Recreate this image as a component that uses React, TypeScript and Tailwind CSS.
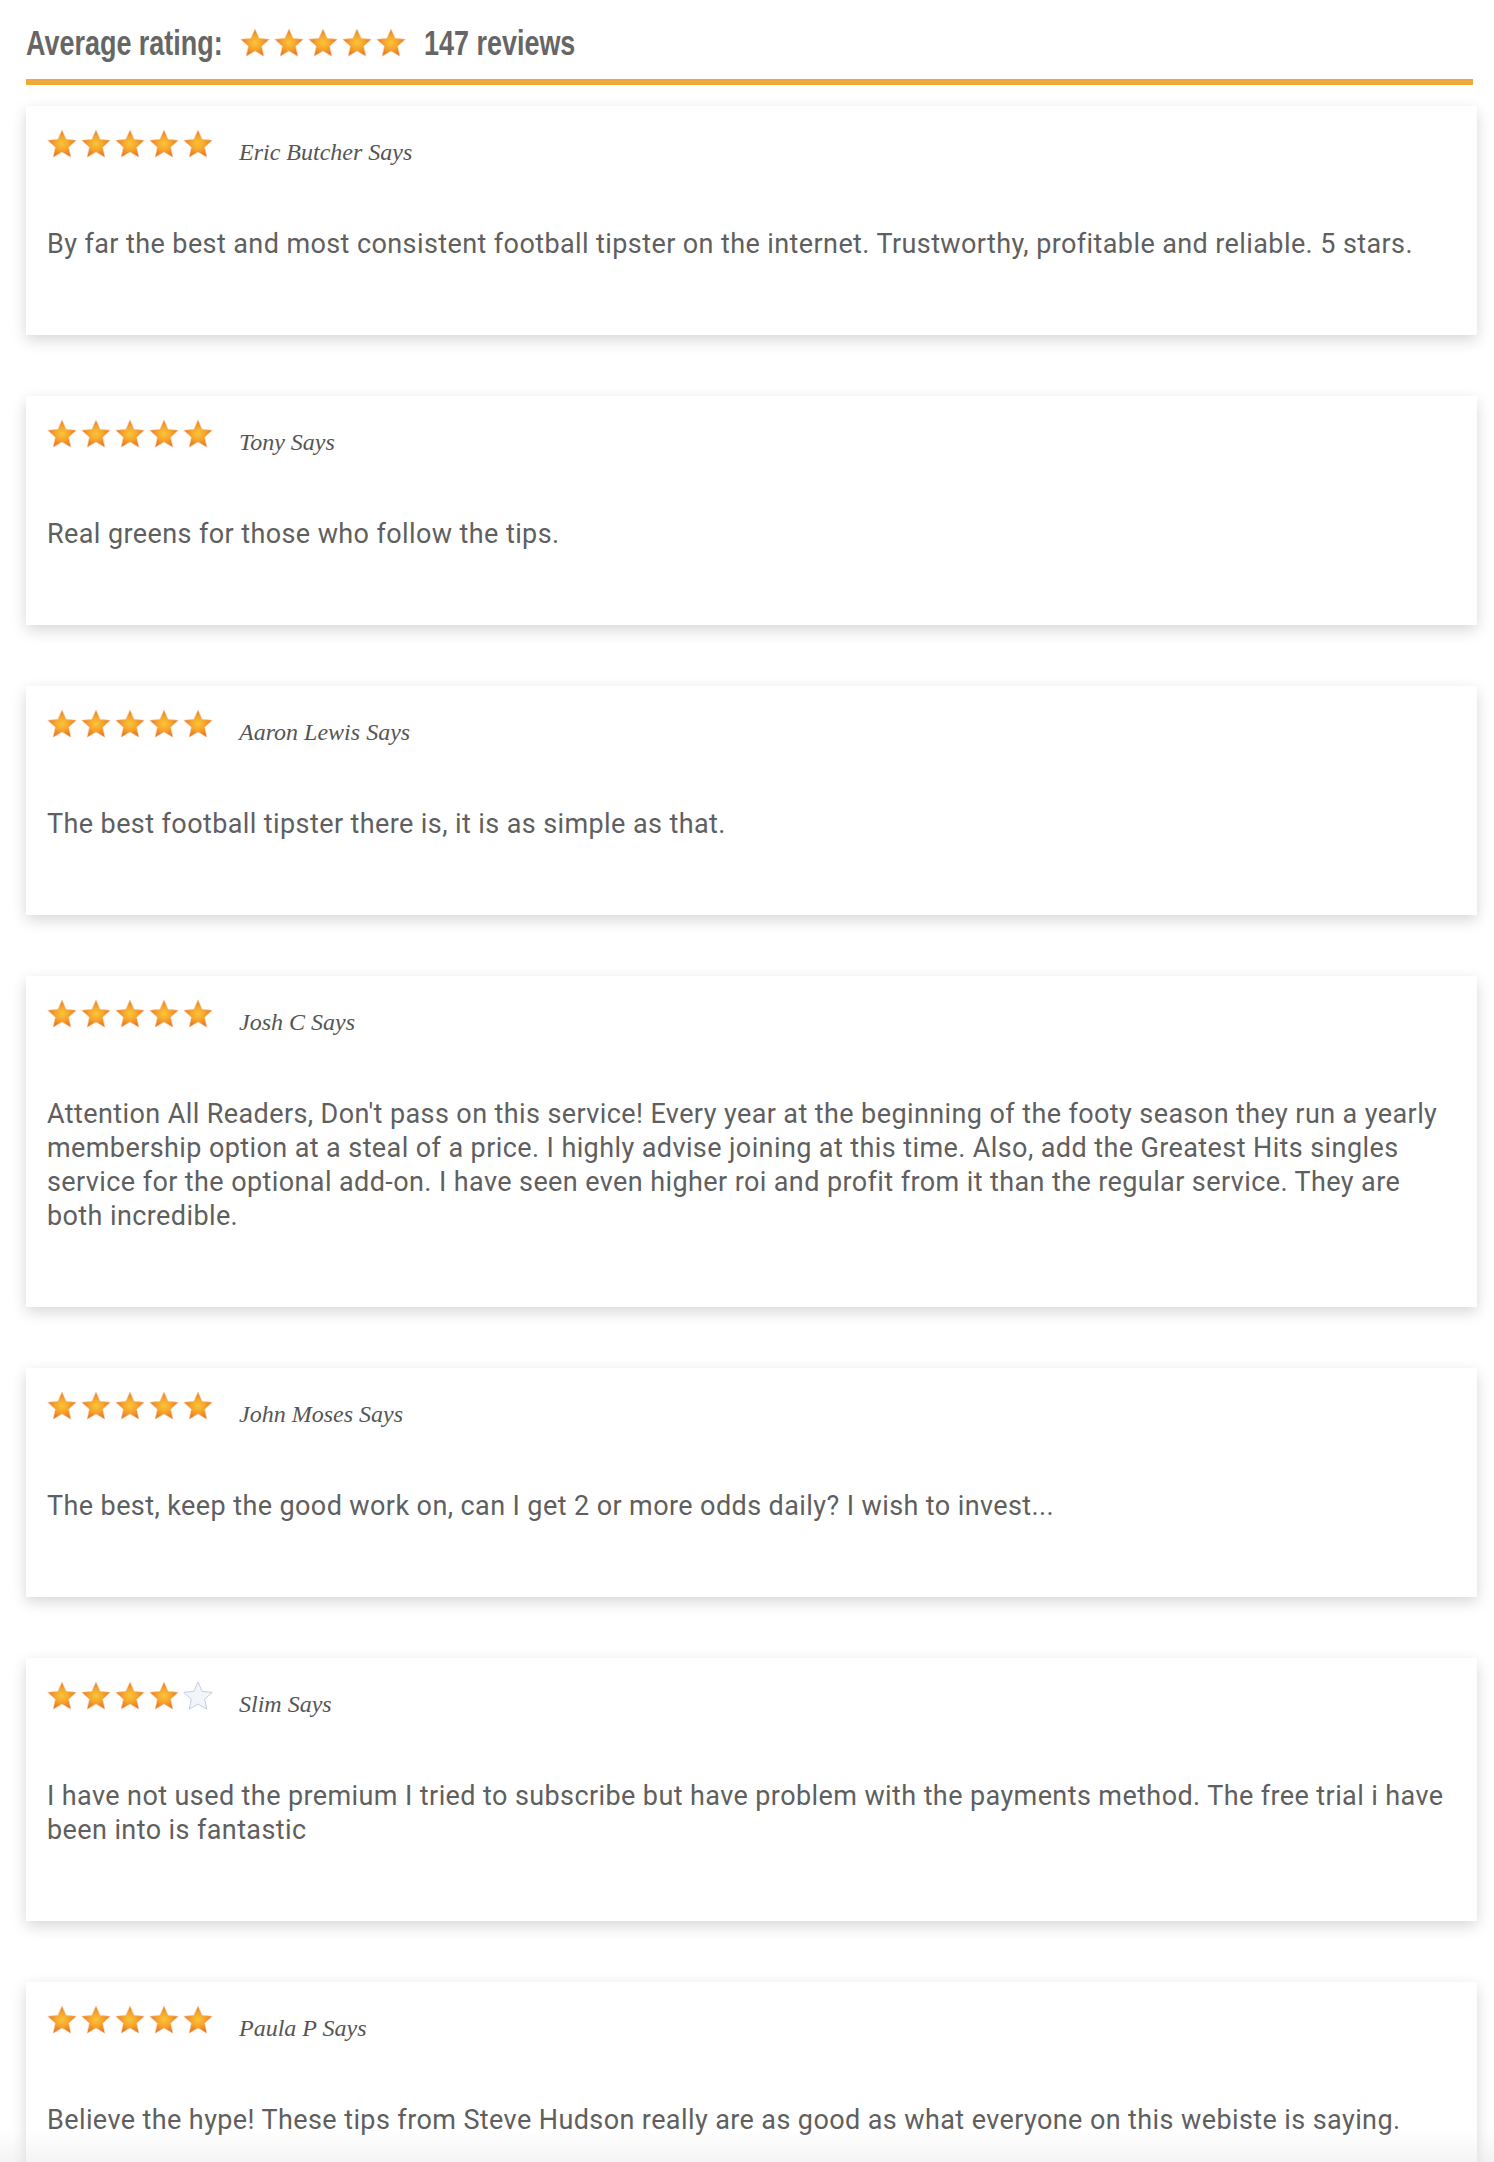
import { useId } from "react";

type Review = { name: string; rating: number; text: string };

const reviews: Review[] = [
  {
    name: "Eric Butcher",
    rating: 5,
    text: "By far the best and most consistent football tipster on the internet. Trustworthy, profitable and reliable. 5 stars.",
  },
  { name: "Tony", rating: 5, text: "Real greens for those who follow the tips." },
  { name: "Aaron Lewis", rating: 5, text: "The best football tipster there is, it is as simple as that." },
  {
    name: "Josh C",
    rating: 5,
    text: "Attention All Readers, Don't pass on this service! Every year at the beginning of the footy season they run a yearly membership option at a steal of a price. I highly advise joining at this time. Also, add the Greatest Hits singles service for the optional add-on. I have seen even higher roi and profit from it than the regular service. They are both incredible.",
  },
  {
    name: "John Moses",
    rating: 5,
    text: "The best, keep the good work on, can I get 2 or more odds daily? I wish to invest...",
  },
  {
    name: "Slim",
    rating: 4,
    text: "I have not used the premium I tried to subscribe but have problem with the payments method. The free trial i have been into is fantastic",
  },
  {
    name: "Paula P",
    rating: 5,
    text: "Believe the hype! These tips from Steve Hudson really are as good as what everyone on this webiste is saying.",
  },
];

const STAR =
  "M12 0.8L15.29 8.27L23.41 9.09L17.33 14.53L19.05 22.51L12 18.4L4.95 22.51L6.67 14.53L0.59 9.09L8.71 8.27Z";

function Star({ filled }: { filled: boolean }) {
  const id = useId();
  return (
    <svg viewBox="0 0 24 24" className="w-[30px] h-[30px] flex-shrink-0">
      <defs>
        <radialGradient id={id} cx="50%" cy="50%" r="52%">
          <stop offset="0%" stopColor="#fac637" />
          <stop offset="50%" stopColor="#f6a22b" />
          <stop offset="100%" stopColor="#ec6c18" />
        </radialGradient>
      </defs>
      {filled ? (
        <path d={STAR} fill={`url(#${id})`} stroke="#f2c9a6" strokeWidth="0.5" strokeLinejoin="round" />
      ) : (
        <path d={STAR} fill="#f2f5f9" stroke="#c5cfdd" strokeWidth="0.8" strokeLinejoin="round" />
      )}
    </svg>
  );
}

function Stars({ rating }: { rating: number }) {
  return (
    <div className="flex items-center gap-[4px]">
      {[1, 2, 3, 4, 5].map((n) => (
        <Star key={n} filled={n <= rating} />
      ))}
    </div>
  );
}

export default function App() {
  return (
    <div className="relative min-h-[2162px] bg-white overflow-hidden">
      <div className="ml-[26px] w-[1451px] pt-[20px]">
        {/* Average rating header */}
        <div className="w-[1447px] h-[65px] pb-[14px] border-b-[6px] border-[#f0a83a] flex items-center text-[#666666] font-bold text-[35px] leading-[40px] font-['Liberation_Sans',Arial,sans-serif]">
          <span className="inline-block origin-left scale-x-[0.77] -mr-[59px] whitespace-nowrap">
            Average rating:
          </span>
          <div className="ml-[18px]">
            <Stars rating={5} />
          </div>
          <span className="ml-[18px] inline-block origin-left scale-x-[0.77] whitespace-nowrap">
            147 reviews
          </span>
        </div>

        {/* Reviews */}
        <div className="mt-[21px] flex flex-col gap-[61px]">
          {reviews.map((r) => (
            <div
              key={r.name}
              className="bg-white px-[21px] pt-[23px] pb-[74px] shadow-[0_5px_14px_rgba(0,0,0,0.16)]"
            >
              <div className="flex items-start gap-[26px]">
                <Stars rating={r.rating} />
                <span className="mt-[11px] italic text-[24px] leading-[24px] text-[#555555] font-['Liberation_Serif','Times_New_Roman',serif]">
                  {r.name} Says
                </span>
              </div>
              <p className="mt-[63px] text-[27px] leading-[34px] tracking-[0.4px] text-[#5f5f5f] font-['Roboto',sans-serif]">
                {r.text}
              </p>
            </div>
          ))}
        </div>
      </div>

      {/* fade at bottom */}
      <div className="absolute left-0 right-0 bottom-0 h-[80px] bg-gradient-to-b from-transparent to-[#e2e2e2]" />
    </div>
  );
}
